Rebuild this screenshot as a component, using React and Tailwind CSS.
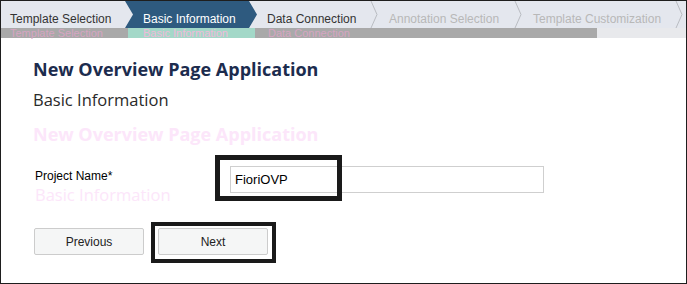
import React from "react";

const Sep = () => (
  <svg width="8" height="27" viewBox="0 0 8 27" className="shrink-0">
    <polyline points="1,0 7,13.5 1,27" fill="none" stroke="#b9bcc2" strokeWidth="1" />
  </svg>
);

export default function App() {
  const sans = { fontFamily: '"Liberation Sans", Arial, sans-serif' };
  const ui = { fontFamily: '"Open Sans", "Noto Sans", sans-serif' };
  return (
    <div className="w-[687px] h-[284px] border border-[#1e1e1e] bg-white overflow-hidden" style={sans}>
      {/* Tab bar */}
      <div className="flex h-[27px] bg-[#e4e7ee] text-[12px] leading-[14px]">
        <div className="w-[124px] pl-[9px] pt-[11px] text-[#333]">Template Selection</div>
        <div className="w-[132px] pl-[18px] pt-[11px] text-white bg-[#2e5a7f] [clip-path:polygon(0_0,124px_0,132px_50%,124px_100%,0_100%,8px_50%)]">
          Basic Information
        </div>
        <div className="w-[113px] pl-[10px] pt-[11px] text-[#333]">Data Connection</div>
        <Sep />
        <div className="w-[136px] pl-[11px] pt-[11px] text-[#b8b8b8]">Annotation Selection</div>
        <Sep />
        <div className="w-[153px] pl-[11px] pt-[11px] text-[#b8b8b8]">Template Customization</div>
        <Sep />
      </div>
      {/* Progress bar with ghost text */}
      <div className="flex h-[10px] bg-[#e8e9ec] text-[11px] leading-[10px]">
        <div className="flex w-[596px] bg-[#a9a9a9]">
          <div className="w-[127px] pl-[9px] text-[#d6a5c2]">Template Selection</div>
          <div className="w-[127px] pl-[15px] bg-[#a3d8c8] text-[#efbada]">Basic Information</div>
          <div className="w-[120px] pl-[13px] text-[#d6a5c2]">Data Connection</div>
        </div>
      </div>

      <div className="pl-[32px]">
        <div className="mt-[19px] text-[18px] leading-[24px] font-bold text-[#1c2c4e]" style={ui}>
          New Overview Page Application
        </div>
        <div className="mt-[7px] text-[16.5px] leading-[24px] text-[#2a2a2a]" style={ui}>
          Basic Information
        </div>
        <div className="mt-[10px] text-[18px] leading-[24px] font-bold text-[#fce6fa]" style={ui}>
          New Overview Page Application
        </div>

        <div className="mt-[20px] flex items-start">
          <div className="w-[197px] pl-[2px]">
            <div className="pt-[3px] text-[12px] leading-[14px] text-black">Project Name*</div>
            <div className="mt-[1px] text-[16.5px] leading-[22px] text-[#fce6fa]" style={ui}>
              Basic Information
            </div>
          </div>
          <div className="relative">
            <div className="w-[314px] h-[27px] border border-[#cfcfcf] bg-white pl-[4px] flex items-center text-[13px] text-black">
              FioriOVP
            </div>
            <div className="absolute left-[-15px] top-[-11px] w-[127px] h-[46px] border-[5px] border-[#1a1a1a]" />
          </div>
        </div>

        <div className="mt-[22px] flex gap-[14px] items-start pl-[1px]">
          <div className="w-[110px] h-[27px] border border-[#cccccc] rounded-[2px] bg-[#f5f6f6] flex items-center justify-center text-[12px] text-[#222]">
            Previous
          </div>
          <div className="relative">
            <div className="w-[110px] h-[27px] border border-[#cccccc] rounded-[2px] bg-[#f5f6f6] flex items-center justify-center text-[12px] text-[#222]">
              Next
            </div>
            <div className="absolute left-[-7px] top-[-6px] right-[-8px] bottom-[-8px] border-[4px] border-[#1a1a1a]" />
          </div>
        </div>
      </div>
    </div>
  );
}
